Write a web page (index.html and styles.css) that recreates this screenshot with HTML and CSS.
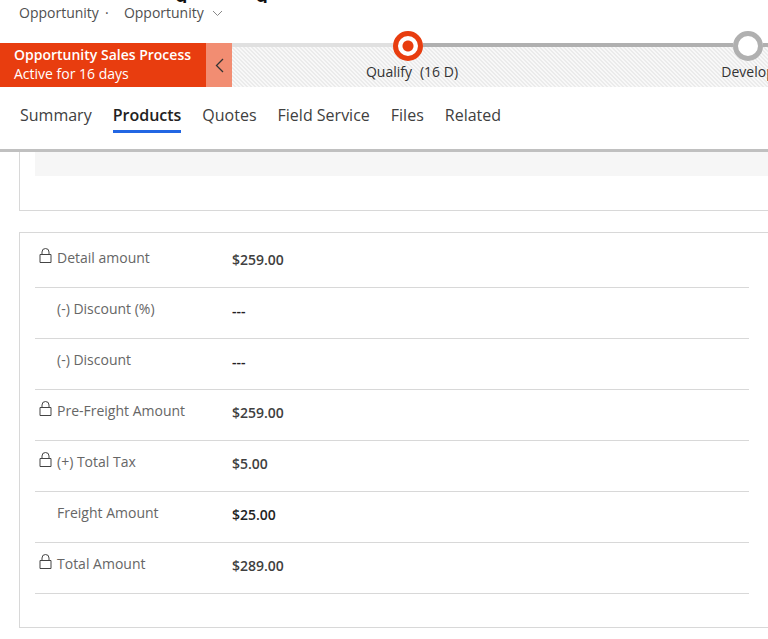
FILE: index.html
```
<!DOCTYPE html>
<html lang="en">
<head>
    <meta charset="UTF-8">
    <meta name="viewport" content="width=device-width, initial-scale=1.0">
    <title>Opportunity</title>
    <link rel="stylesheet" href="styles.css">
</head>
<body>

<svg class="sprite" aria-hidden="true">
    <symbol id="lock" viewBox="0 0 13 17">
        <path d="M1 7.500h11v8H1zM3 7.500V5a3.500 3.500 0 0 1 7 0V7.500" fill="none" stroke="currentColor"/>
    </symbol>
</svg>

<header class="record-header">
    <h1><span>g</span><span>g</span></h1>
    <div class="record-type">
        <span>Opportunity</span>
        <span class="dot">·</span>
        <button type="button" class="form-switch">Opportunity
            <svg width="11" height="7" viewBox="0 0 11 7"><path d="M1 1l4.500 4.500L10 1" fill="none" stroke="currentColor"/></svg>
        </button>
    </div>
</header>

<section class="process">
    <div class="process-name">
        <strong>Opportunity Sales Process</strong>
        <span>Active for 16 days</span>
    </div>
    <button type="button" class="collapse" aria-label="Collapse">
        <svg width="9" height="15" viewBox="0 0 9 15"><path d="M8 1L1.500 7.500L8 14" fill="none" stroke="currentColor" stroke-width="1.300"/></svg>
    </button>
    <div class="stages">
        <div class="stage active">
            <div class="track"><i class="line"></i><i class="circle"></i><i class="line"></i></div>
            <div class="stage-name"><span>Qualify</span><span>(16 D)</span></div>
        </div>
        <div class="stage">
            <div class="track"><i class="line"></i><i class="circle"></i><i class="line"></i></div>
            <div class="stage-name"><span>Develop</span></div>
        </div>
    </div>
</section>

<nav class="tabs">
    <a href="#">Summary</a>
    <a href="#" class="selected">Products</a>
    <a href="#">Quotes</a>
    <a href="#">Field Service</a>
    <a href="#">Files</a>
    <a href="#">Related</a>
</nav>

<main>
    <div class="card grid-card">
        <div class="grid-footer"></div>
    </div>

    <form class="card totals">
        <div class="field">
            <svg class="lock"><use href="#lock"/></svg>
            <label for="detail">Detail amount</label>
            <input type="text" id="detail" value="$259.00" readonly>
        </div>
        <div class="field">
            <label for="discountPercent">(-) Discount (%)</label>
            <input type="text" id="discountPercent" value="---">
        </div>
        <div class="field">
            <label for="discount">(-) Discount</label>
            <input type="text" id="discount" value="---">
        </div>
        <div class="field">
            <svg class="lock"><use href="#lock"/></svg>
            <label for="preFreight">Pre-Freight Amount</label>
            <input type="text" id="preFreight" value="$259.00" readonly>
        </div>
        <div class="field">
            <svg class="lock"><use href="#lock"/></svg>
            <label for="tax">(+) Total Tax</label>
            <input type="text" id="tax" value="$5.00" readonly>
        </div>
        <div class="field">
            <label for="freight">Freight Amount</label>
            <input type="text" id="freight" value="$25.00">
        </div>
        <div class="field">
            <svg class="lock"><use href="#lock"/></svg>
            <label for="total">Total Amount</label>
            <input type="text" id="total" value="$289.00" readonly>
        </div>
    </form>
</main>

</body>
</html>
```
FILE: styles.css
```
* {
    box-sizing: border-box;
}

body {
    margin: 0;
    font-family: "Segoe UI", "Open Sans", sans-serif;
    font-size: 14px;
    color: #333;
    background-color: #fff;
}

button {
    font: inherit;
    color: inherit;
    border: none;
    padding: 0;
    cursor: pointer;
}

.sprite {
    display: none;
}

/* Record header */
.record-header {
    height: 43px;
}

/* only the bottom of the title is still in view */
h1 {
    display: flex;
    align-items: flex-end;
    gap: 68px;
    height: 3px;
    margin: 0;
    padding-left: 175px;
    overflow: hidden;
    font-family: "Segoe UI", "Noto Sans", sans-serif;
    font-size: 20px;
    line-height: 16px;
    font-weight: 600;
    color: #111;
}

.record-type {
    display: flex;
    padding-left: 19px;
    line-height: 20px;
    color: #505050;
}

.dot {
    width: 25px;
    padding-left: 6px;
}

.form-switch {
    display: flex;
    align-items: center;
    gap: 8px;
    background: none;
}

.form-switch svg {
    color: #888;
}

/* Business process bar */
.process {
    display: flex;
    height: 44px;
}

.process-name {
    display: flex;
    flex-direction: column;
    flex: 0 0 206px;
    padding: 2px 0 0 14px;
    line-height: 19px;
    white-space: nowrap;
    color: #fff;
    background-color: #e83d0f;
}

.process-name strong {
    font-weight: 600;
}

.collapse {
    flex: 0 0 26px;
    background-color: #f28d72;
}

.collapse svg {
    display: block;
    margin: 0 auto;
}

.stages {
    display: flex;
    flex: 1;
    min-width: 0;
    overflow-x: clip;
    background: linear-gradient(45deg, #f8f8f8 25%, #ebebeb 25% 50%, #f8f8f8 50% 75%, #ebebeb 75%);
    background-size: 4px 4px;
}

.stage {
    flex: 0 0 328px;
}

.stage:first-child {
    flex-basis: 352px;
}

.track {
    display: flex;
    margin-top: -12px;
}

.line {
    flex: 1;
    height: 4px;
    margin-top: 12px;
    background-color: #b0b0b0;
}

.active .line:first-child {
    background-color: #e0e0e0;
}

.circle {
    width: 30px;
    height: 30px;
    border: 5px solid #b0b0b0;
    border-radius: 50%;
    background-color: #fff;
}

.active .circle {
    border-color: #e83d0f;
    background: radial-gradient(circle, #e83d0f 5px, #fff 6px);
}

.stage-name {
    display: flex;
    justify-content: center;
    gap: 8px;
    line-height: 22px;
}

.active .stage-name {
    padding-left: 8px;
}

/* Tabs */
.tabs {
    display: flex;
    gap: 21px;
    height: 65px;
    padding: 16px 20px 0;
    border-bottom: 3px solid #c0c0c0;
    font-size: 16px;
    line-height: 24px;
}

.tabs a {
    height: 30px;
    color: #404040;
    text-decoration: none;
    white-space: nowrap;
}

.tabs .selected {
    border-bottom: 3px solid #2266e3;
    font-weight: 600;
    color: #222;
}

/* Form sections */
main {
    padding-left: 19px;
}

.card {
    border: 1px solid #d8d8d8;
    border-right: none;
}

.grid-card {
    height: 59px;
    margin-bottom: 21px;
    padding-left: 15px;
    border-top: none;
}

.grid-footer {
    height: 24px;
    background-color: #f6f6f6;
}

.totals {
    padding: 4px 19px 33px 15px;
}

.field {
    display: grid;
    grid-template-columns: 22px 175px 1fr;
    height: 51px;
    border-bottom: 1px solid #d8d8d8;
}

.lock {
    width: 13px;
    height: 17px;
    margin: 10px 0 0 4px;
    color: #444;
}

.field label {
    grid-column: 2;
    padding-top: 11px;
    line-height: 20px;
    color: #666;
}

.field input {
    grid-column: 3;
    height: 20px;
    margin-top: 12px;
    padding: 0;
    border: none;
    outline: none;
    font: inherit;
    font-weight: 600;
    color: #222;
    background: none;
}

.field input[readonly] {
    color: #404040;
}
```
